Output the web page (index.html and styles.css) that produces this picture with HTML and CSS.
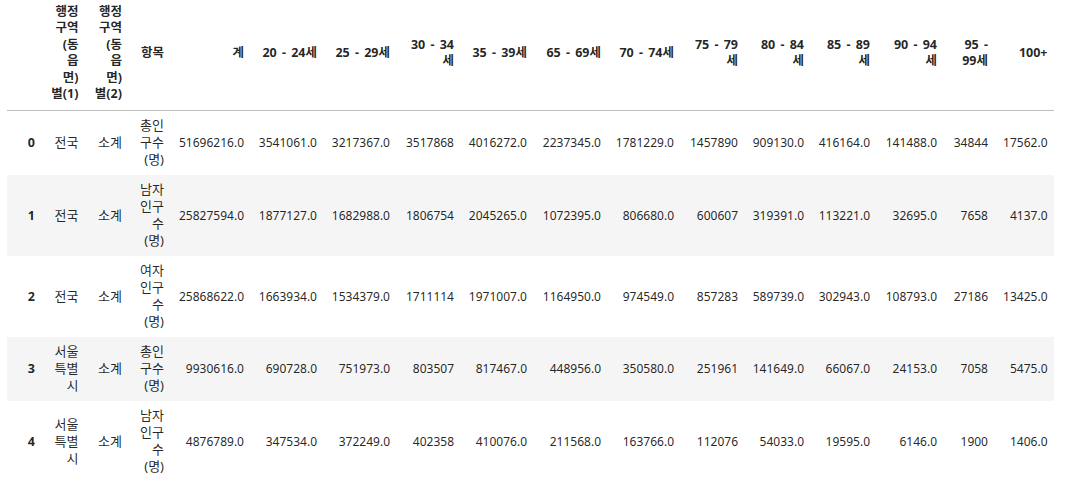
FILE: index.html
```html
<!DOCTYPE html>
<html lang="ko">
<head>
<meta charset="utf-8">
<title>DataFrame</title>
<link rel="stylesheet" href="styles.css">
</head>
<body>
<div class="output">
<table class="df">
  <colgroup>
    <col class="w-idx"><col class="w-r1"><col class="w-r2"><col class="w-item">
    <col class="w-total"><col class="w-a1"><col class="w-a2"><col class="w-a3">
    <col class="w-a4"><col class="w-a5"><col class="w-a6"><col class="w-a7">
    <col class="w-a8"><col class="w-a9"><col class="w-a10"><col class="w-a11">
    <col class="w-a12">
  </colgroup>
  <thead>
    <tr>
      <th></th>
      <th>행정<br>구역<br>(동<br>읍<br>면)<br>별(1)</th>
      <th>행정<br>구역<br>(동<br>읍<br>면)<br>별(2)</th>
      <th>항목</th>
      <th>계</th>
      <th>20 - 24세</th>
      <th>25 - 29세</th>
      <th>30 - 34<br>세</th>
      <th>35 - 39세</th>
      <th>65 - 69세</th>
      <th>70 - 74세</th>
      <th>75 - 79<br>세</th>
      <th>80 - 84<br>세</th>
      <th>85 - 89<br>세</th>
      <th>90 - 94<br>세</th>
      <th>95 -<br>99세</th>
      <th>100+</th>
    </tr>
  </thead>
  <tbody>
    <tr>
      <th>0</th><td>전국</td><td>소계</td><td>총인<br>구수<br>(명)</td>
      <td>51696216.0</td><td>3541061.0</td><td>3217367.0</td><td>3517868</td><td>4016272.0</td><td>2237345.0</td><td>1781229.0</td><td>1457890</td><td>909130.0</td><td>416164.0</td><td>141488.0</td><td>34844</td><td>17562.0</td>
    </tr>
    <tr>
      <th>1</th><td>전국</td><td>소계</td><td>남자<br>인구<br>수<br>(명)</td>
      <td>25827594.0</td><td>1877127.0</td><td>1682988.0</td><td>1806754</td><td>2045265.0</td><td>1072395.0</td><td>806680.0</td><td>600607</td><td>319391.0</td><td>113221.0</td><td>32695.0</td><td>7658</td><td>4137.0</td>
    </tr>
    <tr>
      <th>2</th><td>전국</td><td>소계</td><td>여자<br>인구<br>수<br>(명)</td>
      <td>25868622.0</td><td>1663934.0</td><td>1534379.0</td><td>1711114</td><td>1971007.0</td><td>1164950.0</td><td>974549.0</td><td>857283</td><td>589739.0</td><td>302943.0</td><td>108793.0</td><td>27186</td><td>13425.0</td>
    </tr>
    <tr>
      <th>3</th><td>서울<br>특별<br>시</td><td>소계</td><td>총인<br>구수<br>(명)</td>
      <td>9930616.0</td><td>690728.0</td><td>751973.0</td><td>803507</td><td>817467.0</td><td>448956.0</td><td>350580.0</td><td>251961</td><td>141649.0</td><td>66067.0</td><td>24153.0</td><td>7058</td><td>5475.0</td>
    </tr>
    <tr>
      <th>4</th><td>서울<br>특별<br>시</td><td>소계</td><td>남자<br>인구<br>수<br>(명)</td>
      <td>4876789.0</td><td>347534.0</td><td>372249.0</td><td>402358</td><td>410076.0</td><td>211568.0</td><td>163766.0</td><td>112076</td><td>54033.0</td><td>19595.0</td><td>6146.0</td><td>1900</td><td>1406.0</td>
    </tr>
  </tbody>
</table>
</div>
</body>
</html>
```

FILE: styles.css
```css
html, body {
  margin: 0;
  padding: 0;
  background: #ffffff;
}

body {
  font-family: "Noto Sans", "Noto Sans CJK KR", sans-serif;
  color: rgba(0, 0, 0, 0.87);
}

.output {
  padding-left: 7px;
  margin-top: -3px;
}

.df {
  border-collapse: collapse;
  border-spacing: 0;
  border: none;
  table-layout: fixed;
  width: 1047px;
  font-size: 12px;
}

.df th,
.df td {
  text-align: right;
  vertical-align: middle;
  padding: 6.5px;
  line-height: 17px;
  white-space: nowrap;
  border: none;
}

.df thead {
  border-bottom: 1px solid #bdbdbd;
}

.df thead th {
  font-weight: 700;
  font-size: 12.5px;
  line-height: 16.6px;
  word-spacing: 2px;
}

.df tbody th {
  font-weight: 700;
  font-size: 12.5px;
}

/* region / item text columns: Korean labels */
.df tbody td:nth-child(2),
.df tbody td:nth-child(3),
.df tbody td:nth-child(4) {
  font-size: 13px;
}

.df tbody tr:nth-child(even) {
  background: #f5f5f5;
}

.w-idx { width: 34.5px; }
.w-r1 { width: 43.5px; }
.w-r2 { width: 43.5px; }
.w-item { width: 42px; }
.w-total { width: 80px; }
.w-a1 { width: 73px; }
.w-a2 { width: 73px; }
.w-a3 { width: 64px; }
.w-a4 { width: 73px; }
.w-a5 { width: 74px; }
.w-a6 { width: 73px; }
.w-a7 { width: 64px; }
.w-a8 { width: 66px; }
.w-a9 { width: 66px; }
.w-a10 { width: 67px; }
.w-a11 { width: 51px; }
.w-a12 { width: 59.5px; }
```
